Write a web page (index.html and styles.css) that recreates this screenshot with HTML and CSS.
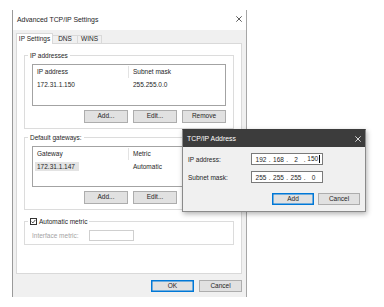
FILE: index.html
```html
<!DOCTYPE html>
<html>
<head>
<meta charset="utf-8">
<link rel="stylesheet" href="styles.css">
</head>
<body>
<div class="win-main">
  <div class="titlebar">
    <span class="title">Advanced TCP/IP Settings</span>
    <svg class="close" viewBox="0 0 6 6" width="6" height="6"><path d="M0.3 0.3 L5.7 5.7 M5.7 0.3 L0.3 5.7" stroke="#333" stroke-width="0.8" fill="none"/></svg>
  </div>
  <div class="client">
    <div class="tabs">
      <div class="tab active t1">IP Settings</div>
      <div class="tab t2">DNS</div>
      <div class="tab t3">WINS</div>
    </div>
    <div class="panel">
      <fieldset class="group g1">
        <legend>IP addresses</legend>
        <div class="list">
          <div class="lv-head"><span class="c1">IP address</span><span class="c2">Subnet mask</span></div>
          <div class="lv-row"><span class="c1">172.31.1.150</span><span class="c2">255.255.0.0</span></div>
        </div>
        <div class="btnrow">
          <button class="btn">Add...</button>
          <button class="btn">Edit...</button>
          <button class="btn">Remove</button>
        </div>
      </fieldset>
      <fieldset class="group g2">
        <legend>Default gateways:</legend>
        <div class="list list2">
          <div class="lv-head"><span class="c1">Gateway</span><span class="c2">Metric</span></div>
          <div class="lv-row"><span class="c1"><span class="hl">172.31.1.147</span></span><span class="c2">Automatic</span></div>
        </div>
        <div class="btnrow">
          <button class="btn">Add...</button>
          <button class="btn">Edit...</button>
          <button class="btn">Remove</button>
        </div>
      </fieldset>
      <fieldset class="group g3">
        <legend class="cb-legend"><span class="cb"><svg viewBox="0 0 5 5" width="5" height="5"><path d="M0.6 2.6 L1.9 3.9 L4.4 0.9" stroke="#222" stroke-width="0.8" fill="none"/></svg></span>Automatic metric</legend>
        <div class="metric-row">
          <span class="metric-label">Interface metric:</span>
          <span class="metric-input"></span>
        </div>
      </fieldset>
    </div>
    <div class="footer">
      <button class="btn fbtn default">OK</button>
      <button class="btn fbtn">Cancel</button>
    </div>
  </div>
</div>

<div class="win-sub">
  <div class="sub-title">
    <span>TCP/IP Address</span>
    <svg class="close" viewBox="0 0 6 6" width="6" height="6"><path d="M0.3 0.3 L5.7 5.7 M5.7 0.3 L0.3 5.7" stroke="#fff" stroke-width="0.8" fill="none"/></svg>
  </div>
  <div class="sub-body">
    <div class="form">
      <span class="flabel">IP address:</span>
      <div class="ip"><span class="seg">192</span><span class="dot">.</span><span class="seg">168</span><span class="dot">.</span><span class="seg">2</span><span class="dot">.</span><span class="seg">150<span class="caret"></span></span></div>
      <span class="flabel">Subnet mask:</span>
      <div class="ip"><span class="seg">255</span><span class="dot">.</span><span class="seg">255</span><span class="dot">.</span><span class="seg">255</span><span class="dot">.</span><span class="seg">0</span></div>
    </div>
    <div class="sub-buttons">
      <button class="btn sbtn default">Add</button>
      <button class="btn sbtn">Cancel</button>
    </div>
  </div>
</div>
</body>
</html>
```
FILE: styles.css
```css
* { box-sizing: border-box; }
html, body { margin: 0; padding: 0; }
body {
  width: 384px;
  height: 307px;
  background: #fff;
  font-family: "Liberation Sans", Arial, sans-serif;
  font-size: 6.5px;
  color: #1e1e1e;
  overflow: hidden;
  position: relative;
}

.win-main {
  position: absolute;
  left: 12px;
  top: 10px;
  width: 235px;
  height: 287px;
  border-left: 1px solid #9a9a9a;
  border-right: 1px solid #a6a6a6;
  display: flex;
  flex-direction: column;
}
.titlebar {
  height: 20px;
  background: #fff;
  display: flex;
  align-items: center;
  justify-content: space-between;
  padding: 0 4px 2px 4px;
}
.title { font-size: 6.9px; }
.close { display: block; }

.client {
  flex: 1;
  background: #f0f0f0;
  padding: 3px 4px 0 3px;
  display: flex;
  flex-direction: column;
}
.tabs {
  display: flex;
  align-items: flex-end;
  height: 10px;
  position: relative;
  z-index: 1;
}
.tab {
  height: 8px;
  border: 1px solid #d9d9d9;
  border-bottom: none;
  background: #f0f0f0;
  display: flex;
  align-items: center;
  justify-content: center;
  line-height: 1;
}
.tab.active {
  height: 11px;
  margin-bottom: -1px;
  background: #fff;
  position: relative;
  z-index: 2;
}
.t1 { width: 37px; }
.t2 { width: 26px; margin-left: -1px; }
.t3 { width: 25px; margin-left: -1px; }

.panel {
  height: 231px;
  border: 1px solid #d9d9d9;
  background: #fff;
  padding: 0 7px;
}

fieldset.group {
  margin: 0;
  border: 1px solid #dcdcdc;
  padding: 4px 7px 5px;
  min-width: 0;
}
fieldset.group legend {
  padding: 0 2px;
  margin-left: -4px;
  line-height: 9px;
  height: 9px;
}
.g1 { margin-top: 7px !important; }
.g2 { margin-top: 4px !important; }
.g3 { margin-top: 7px !important; padding: 4px 7px 3px !important; }

.list {
  height: 42px;
  border: 1px solid #a3a3a3;
  background: #fff;
}
.list2 { height: 41px; }
.lv-head {
  display: flex;
  height: 13px;
  align-items: center;
}
.lv-head .c1 { border-right: 1px solid #e3e3e3; height: 12px; line-height: 12px; }
.lv-row {
  display: flex;
  height: 12px;
  align-items: center;
}
.c1 { width: 96px; padding-left: 4px; }
.c2 { padding-left: 4px; }
.hl {
  background: #e3e3e3;
  padding: 1px 4px 1px 2px;
  margin-left: -2px;
}

.btnrow {
  display: flex;
  justify-content: flex-end;
  gap: 5px;
  margin-top: 4px;
}
.btn {
  width: 44px;
  height: 13px;
  border: 1px solid #adadad;
  background: #e1e1e1;
  font: inherit;
  color: inherit;
  padding: 0;
  line-height: 1;
}
.btn.default {
  border-color: #0078d7;
  box-shadow: inset 0 0 0 0.5px #0078d7;
}

.cb-legend { display: flex; align-items: center; }
.cb {
  display: inline-flex;
  align-items: center;
  justify-content: center;
  width: 7px;
  height: 7px;
  border: 1px solid #333;
  background: #fff;
  margin-right: 2px;
}
.cb svg { display: block; }

.metric-row { display: flex; align-items: center; }
.metric-label { width: 57px; color: #a3a3a3; }
.metric-input {
  width: 45px;
  height: 11px;
  border: 1px solid #cfcfcf;
  background: #fff;
}

.footer {
  display: flex;
  justify-content: flex-end;
  gap: 5px;
  padding-top: 6px;
}
.fbtn { width: 43px; height: 12px; }

.win-sub {
  position: absolute;
  left: 182px;
  top: 129px;
  width: 184px;
  height: 83px;
  border: 1px solid #8a8a8a;
  border-top-color: #3c3c3c;
  background: #f0f0f0;
  box-shadow: 1px 2px 5px rgba(0, 0, 0, 0.3);
  display: flex;
  flex-direction: column;
}
.sub-title {
  height: 17px;
  background: #3c3c3c;
  color: #fff;
  font-size: 6.9px;
  display: flex;
  align-items: center;
  justify-content: space-between;
  padding: 0 4px 0 4px;
}
.sub-body {
  padding: 6px 5px 0 5px;
}
.form {
  display: grid;
  grid-template-columns: 63px 72px;
  row-gap: 6px;
  align-items: center;
}
.ip {
  height: 12px;
  border: 1px solid #7a7a7a;
  background: #fff;
  display: flex;
  align-items: center;
  padding-left: 2px;
}
.seg { width: 14px; text-align: center; white-space: nowrap; }
.dot { width: 3.5px; text-align: center; }
.caret {
  display: inline-block;
  width: 1px;
  height: 8px;
  background: #000;
  vertical-align: middle;
  margin-left: 0.5px;
}
.sub-buttons {
  display: flex;
  justify-content: flex-end;
  gap: 4px;
  margin-top: 10px;
}
.sbtn { width: 42px; height: 12px; }
```
